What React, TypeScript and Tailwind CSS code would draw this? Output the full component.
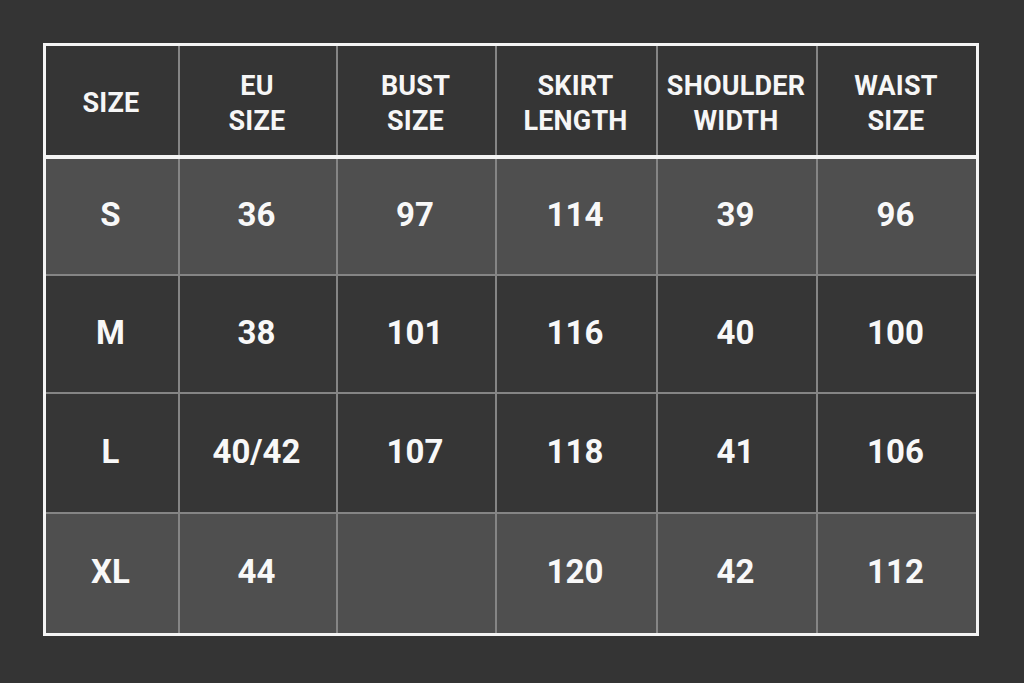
import React from "react";

const cols = "grid-cols-[132px_156px_157px_159px_158px_158px]";

const headers = [
  ["SIZE"],
  ["EU", "SIZE"],
  ["BUST", "SIZE"],
  ["SKIRT", "LENGTH"],
  ["SHOULDER", "WIDTH"],
  ["WAIST", "SIZE"],
];

const rows: { cells: string[]; light: boolean; h: string }[] = [
  { cells: ["S", "36", "97", "114", "39", "96"], light: true, h: "h-[115px]" },
  { cells: ["M", "38", "101", "116", "40", "100"], light: false, h: "h-[116px]" },
  { cells: ["L", "40/42", "107", "118", "41", "106"], light: false, h: "h-[118px]" },
  { cells: ["XL", "44", "", "120", "42", "112"], light: true, h: "h-[119px]" },
];

export default function App() {
  return (
    <div
      className="w-[1024px] h-[683px] bg-[#343434] pt-[43px] pl-[43px]"
      style={{ fontFamily: "Roboto, 'Liberation Sans', sans-serif" }}
    >
      <div className="w-[936px] h-[593px] border-[3px] border-[#f4f4f4] bg-[#858585] flex flex-col">
        <div className={`grid ${cols} gap-x-[2px] h-[109px]`}>
          {headers.map((h, i) => (
            <div
              key={i}
              className="bg-[#353535] flex flex-col items-center justify-center text-[#f6f6f6] font-bold text-[27px] leading-[35px] tracking-[0.2px] pt-[6px] pr-[2px]"
            >
              {h.map((l, j) => (
                <span key={j}>{l}</span>
              ))}
            </div>
          ))}
        </div>
        <div className="h-[4px] bg-[#f4f4f4]" />
        <div className="flex flex-col gap-y-[2px]">
          {rows.map((r, i) => (
            <div key={i} className={`grid ${cols} gap-x-[2px] ${r.h}`}>
              {r.cells.map((c, j) => (
                <div
                  key={j}
                  className={`${r.light ? "bg-[#4f4f4f]" : "bg-[#363636]"} flex items-center justify-center text-[#f8f8f8] font-bold text-[33px] pb-[3px] pr-[3px]`}
                >
                  {c}
                </div>
              ))}
            </div>
          ))}
        </div>
      </div>
    </div>
  );
}
